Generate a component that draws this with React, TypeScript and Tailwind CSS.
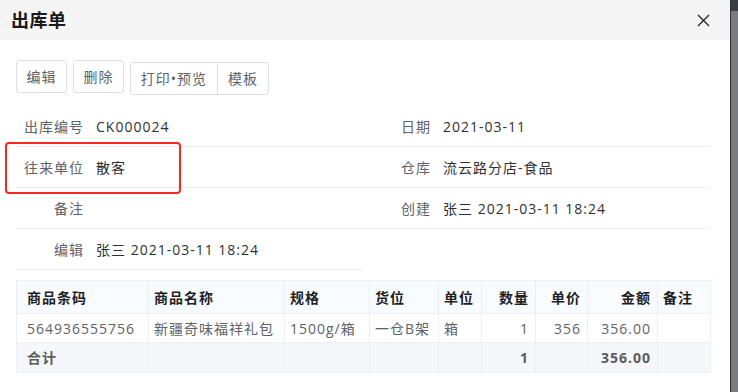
import React from 'react';

const font = "font-['Open_Sans','Noto_Sans_CJK_SC',sans-serif] tracking-[1px]";

const infoRows: [string, string][] = [
    ['出库编号', 'CK000024'],
    ['日期', '2021-03-11'],
    ['往来单位', '散客'],
    ['仓库', '流云路分店-食品'],
    ['备注', ''],
    ['创建', '张三 2021-03-11 18:24'],
    ['编辑', '张三 2021-03-11 18:24'],
];

type Col = { title: string; width: number; align: 'left' | 'right'; first?: boolean };

const columns: Col[] = [
    { title: '商品条码', width: 132, align: 'left', first: true },
    { title: '商品名称', width: 136, align: 'left' },
    { title: '规格', width: 85, align: 'left' },
    { title: '货位', width: 69, align: 'left' },
    { title: '单位', width: 43, align: 'left' },
    { title: '数量', width: 54, align: 'right' },
    { title: '单价', width: 52, align: 'right' },
    { title: '金额', width: 70, align: 'right' },
    { title: '备注', width: 53, align: 'left' },
];

const bodyRow = ['564936555756', '新疆奇味福祥礼包', '1500g/箱', '一仓B架', '箱', '1', '356', '356.00', ''];
const totalRow = ['合计', '', '', '', '', '1', '', '356.00', ''];

function cellPad(col: Col) {
    if (col.align === 'right') return 'text-right pr-[6px]';
    return col.first ? 'text-left pl-[10px]' : 'text-left pl-[5px]';
}

function Button({ children, className = '' }: { children: React.ReactNode; className?: string }) {
    return (
        <div className={`h-[33px] flex items-center justify-center text-[14px] text-[#606266] ${className}`}>
            {children}
        </div>
    );
}

export default function App() {
    return (
        <div className={`w-[738px] h-[392px] flex overflow-hidden bg-white ${font}`}>
            {/* modal */}
            <div className="relative w-[730px] h-full bg-white">
                {/* header */}
                <div className="h-[40px] bg-[#f5f5f5] flex items-center justify-between pl-[11px] pr-[20px]">
                    <span className="text-[18px] font-bold text-[#1a1a1a] tracking-[0.5px]">出库单</span>
                    <svg width="13" height="13" viewBox="0 0 13 13" className="mt-[1px]">
                        <path d="M1 1 L12 12 M12 1 L1 12" stroke="#2a2a2a" strokeWidth="1.4" />
                    </svg>
                </div>

                {/* toolbar */}
                <div className="flex items-start gap-[6px] pl-[16px] pt-[20px]">
                    <Button className="w-[51px] border border-[#dcdfe6] rounded-[3px]">编辑</Button>
                    <Button className="w-[51px] border border-[#dcdfe6] rounded-[3px]">删除</Button>
                    <div className="mt-[2px] flex border border-[#dcdfe6] rounded-[3px]">
                        <Button className="w-[87px] border-r border-[#dcdfe6] !h-[31px]">打印•预览</Button>
                        <Button className="w-[50px] !h-[31px]">模板</Button>
                    </div>
                </div>

                {/* info */}
                <div className="mt-[11px] ml-[16px] w-[694px] grid grid-cols-2">
                    {infoRows.map(([label, value]) => (
                        <div key={label} className="h-[41px] flex items-center border-b border-[#ebeef5] text-[14px]">
                            <span className="w-[68px] text-right text-[#606266]">{label}</span>
                            <span className="ml-[12px] text-[#303133]">{value}</span>
                        </div>
                    ))}
                </div>

                {/* goods table */}
                <table className="mt-[10px] ml-[16px] w-[694px] table-fixed border-collapse text-[14px]">
                    <colgroup>
                        {columns.map((c) => (
                            <col key={c.title} style={{ width: c.width }} />
                        ))}
                    </colgroup>
                    <thead>
                        <tr className="h-[33px] bg-[#f8fbff]">
                            {columns.map((c) => (
                                <th
                                    key={c.title}
                                    className={`border border-[#ebeef5] font-bold text-[#1f1f1f] ${cellPad(c)}`}
                                >
                                    {c.title}
                                </th>
                            ))}
                        </tr>
                    </thead>
                    <tbody>
                        <tr className="h-[29px]">
                            {bodyRow.map((v, i) => (
                                <td key={i} className={`border border-[#ebeef5] text-[#606266] ${cellPad(columns[i])}`}>
                                    {v}
                                </td>
                            ))}
                        </tr>
                        <tr className="h-[30px] bg-[#f5f7fa]">
                            {totalRow.map((v, i) => (
                                <td
                                    key={i}
                                    className={`border border-[#ebeef5] font-bold text-[#5a5c61] ${cellPad(columns[i])}`}
                                >
                                    {v}
                                </td>
                            ))}
                        </tr>
                    </tbody>
                </table>

                {/* annotation box */}
                <div className="absolute left-[5px] top-[142px] w-[176px] h-[52px] border-[2.5px] border-[#f52a1e] rounded-[4px]" />
            </div>

            {/* backdrop edge */}
            <div className="w-[8px] h-full flex flex-col border-l border-[#2e3035]">
                <div className="h-[11px] bg-[#3a3d43]" />
                <div className="flex-1 bg-[#7a7c81]" />
            </div>
        </div>
    );
}
